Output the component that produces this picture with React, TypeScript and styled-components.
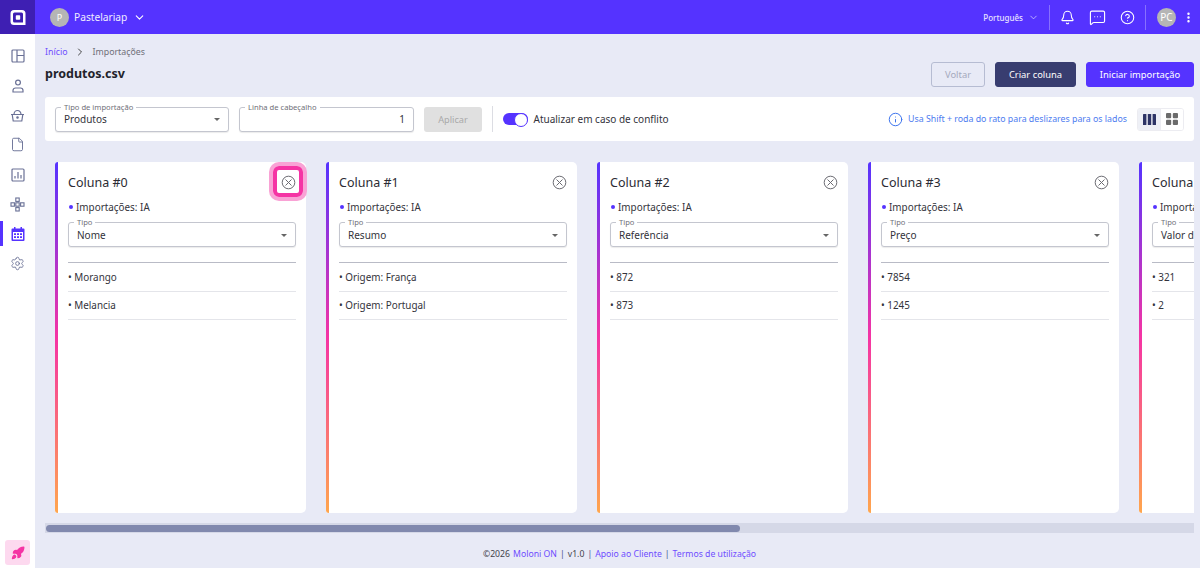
import React from "react";
import styled, { createGlobalStyle } from "styled-components";
import {
  Bell, ChevronDown, ChevronRight, CircleHelp, EllipsisVertical, File, Info,
  MessageSquareMore, Rocket, Settings,
} from "lucide-react";

const Global = createGlobalStyle`
  html, body { margin: 0; padding: 0; height: 100%; overflow: hidden; }
  body { font-family: "Noto Sans", sans-serif; color: #2b2b33; background: #e8eaf6; }
  * { box-sizing: border-box; }
`;

const Page = styled.div`
  width: 1200px; height: 568px; display: grid;
  grid-template-columns: 35px 1fr; grid-template-rows: 34px 1fr;
`;
const LogoCell = styled.div`
  background: #3e1fb3; display: flex; align-items: center; justify-content: center;
`;
const TopBar = styled.header`
  background: #5533ff; color: #fff; display: flex; align-items: center; padding: 0 5.500px 0 15px;
`;
const Avatar = styled.div`
  width: 19px; height: 19px; border-radius: 50%; background: #b5b5b5; color: #fff;
  font-size: 9px; display: flex; align-items: center; justify-content: center; flex-shrink: 0;
`;
const Company = styled.span`
  font-size: 10.200px; margin: 0 5.500px 0 5px; color: #f0edff;
`;
const Spacer = styled.div`flex: 1;`;
const Lang = styled.span`
  font-size: 8px; color: #e6e1ff; margin-right: 4.500px; font-weight: 500;
`;
const LangChevron = styled(ChevronDown)`
  margin-right: 10.500px; color: #e6e1ff;
`;
const VLine = styled.div`
  width: 1px; height: 25px; background: rgba(255,255,255,.3);
`;
const TopIcons = styled.div`
  display: flex; align-items: center; gap: 14px; margin: 0 10px;
`;
const BigAvatar = styled(Avatar)`
  margin-left: 11px; font-size: 10px;
`;
const Dots = styled(EllipsisVertical)`
  margin-left: 5.500px;
`;
const Sidebar = styled.nav`
  background: #fff; display: flex; flex-direction: column; align-items: center; padding-top: 7px;
`;
const NavItem = styled.div<{ $active?: boolean }>`
  width: 35px; height: 29.700px; flex-shrink: 0; display: flex; align-items: center; justify-content: center;
  color: ${p => p.$active ? "#5533ff" : "#6a7196"};
  position: relative;
  ${p => p.$active ? "&::before { content: ''; position: absolute; left: 0; top: 2px; width: 3px; height: 25px; background: #5533ff; }" : ""}
`;
const RocketBox = styled.div`
  margin-top: auto; margin-bottom: 3px; width: 25px; height: 25px; border-radius: 3px; background: #fdd9ef;
  color: #f534a4; display: flex; align-items: center; justify-content: center;
`;
const Main = styled.main`
  min-width: 0; display: flex; flex-direction: column; padding: 0 6px 0 10px;
`;
const Crumbs = styled.div`
  display: flex; align-items: center; gap: 6.500px; font-size: 8.800px; color: #6f6f78; height: 15px; margin-top: 10px;
`;
const Link = styled.a`color: #6e4dff;`;
const HeadRow = styled.div`
  display: flex; align-items: flex-start; height: 38px;
`;
const Title = styled.h1`
  margin: 5px 0 0; font-size: 12.500px; font-weight: 700; color: #23232b; line-height: 20px;
`;
const Btn = styled.button<{ $v: "ghost" | "dark" | "primary" }>`
  height: 25px; border-radius: 3px; font: 400 9.400px "Noto Sans", sans-serif; margin-left: 10px; margin-top: 3px; padding: 0;
  width: ${p => p.$v === "ghost" ? 54 : p.$v === "dark" ? 81 : 108}px;
  border: 1px solid ${p => p.$v === "ghost" ? "#b6bcd2" : p.$v === "dark" ? "#383d70" : "#5533ff"};
  background: ${p => p.$v === "ghost" ? "transparent" : p.$v === "dark" ? "#383d70" : "#5533ff"};
  color: ${p => p.$v === "ghost" ? "#a5a9bd" : "#fff"};
`;
const Filters = styled.section`
  height: 44px; background: #fff; border-radius: 3px; display: flex; align-items: center; padding: 0 10px; flex-shrink: 0;
`;
const Field = styled.div<{ $w?: number; $gap?: number }>`
  position: relative; width: ${p => p.$w ? `${p.$w}px` : "100%"}; height: 25px; border: 1px solid #c4c6cf; border-radius: 3px; background: #fff;
  display: flex; align-items: center; padding: 0 8px; font-size: 10px; color: #33333b;
  margin-left: ${p => p.$gap ?? 0}px;
  box-shadow: 0 1px 1px rgba(0,0,0,.08); flex-shrink: 0;
`;
const Legend = styled.span`
  position: absolute; left: 5px; top: -6px; padding: 0 3px; background: #fff; font-size: 7.600px; line-height: 10px; color: #6f6f78;
`;
const Caret = styled.span`
  margin-left: auto; margin-top: 1px; width: 0; height: 0; border-left: 3.500px solid transparent; border-right: 3.500px solid transparent; border-top: 3.500px solid #666;
`;
const NumberValue = styled.span`margin-left: auto;`;
const Apply = styled.button`
  height: 25px; width: 58px; margin-left: 10px; border: 0; border-radius: 3px; background: #e0e0e0; color: #a9a9a9;
  font: 400 9.200px "Noto Sans", sans-serif; padding: 0;
`;
const Divider = styled.div`
  width: 1px; height: 26px; background: #dcdde3; margin: 0 10px;
`;
const Toggle = styled.div`
  width: 25px; height: 12.500px; border-radius: 7px; background: #5533ff; position: relative; flex-shrink: 0;
  &::after { content: ""; position: absolute; right: 0; top: 0; width: 12.500px; height: 12.500px; border-radius: 50%; background: #fff; border: 1.500px solid #5533ff; }
`;
const ToggleLabel = styled.span`
  margin-left: 5.500px; font-size: 10px; color: #33333b;
`;
const Hint = styled.div`
  margin-left: auto; display: flex; align-items: center; gap: 5px; font-size: 8.800px; color: #4d7cf0;
`;
const ViewGroup = styled.div`
  margin-left: 10px; display: flex; height: 23px; width: 47px; border: 1px solid #ececf1; border-radius: 3px; overflow: hidden;
`;
const ViewBtn = styled.div<{ $on?: boolean }>`
  flex: 1; display: flex; align-items: center; justify-content: center;
  background: ${p => p.$on ? "#eef0f6" : "#fff"};
  & + & { border-left: 1px solid #ececf1; }
`;
const Scroller = styled.div`
  height: 382px; flex-shrink: 0; overflow: hidden; display: flex; gap: 20px; padding: 21px 10px 10px;
`;
const ScrollTrack = styled.div`
  height: 10px; flex-shrink: 0; background: #d5d8e7; padding: 1.500px 1px;
`;
const ScrollThumb = styled.div<{ $w: number }>`
  width: ${p => p.$w}px; height: 7px; background: #8189ae; border-radius: 4px;
`;
const Card = styled.article`
  position: relative; flex: 0 0 251px; height: 351px; background: #fff; border-radius: 3px 5px 5px 3px;
  padding: 0 10px 0 13px;
  &::before {
    content: ""; position: absolute; left: 0; top: 0; bottom: 0; width: 3px; border-radius: 3px 0 0 3px;
    background: linear-gradient(180deg, #5533ff 0%, #f534a4 50%, #ffa64d 100%);
  }
`;
const CardHead = styled.div`
  display: flex; align-items: center; justify-content: space-between; height: 20px; margin-top: 10px;
`;
const CardTitle = styled.h2`
  margin: 0; padding-top: 1px; font-size: 12.500px; line-height: 20px; font-weight: 400; color: #2b2b33;
`;
const CloseSvg = styled.svg`
  display: block; color: #6b6b72; margin-right: 0;
`;
const Spot = styled.div`
  position: absolute; left: 218px; top: 4px; width: 30px; height: 31px; border: 4px solid #f534a4; border-radius: 6px;
  box-shadow: 0 0 0 4px #f9a2d5;
`;
const Import = styled.div`
  display: flex; align-items: center; gap: 3px; font-size: 9.900px; height: 16px; margin-top: 7px; color: #33333b;
  &::before { content: ""; width: 4px; height: 4px; border-radius: 50%; background: #5533ff; margin-left: 1px; }
`;
const TypeField = styled(Field)`
  margin-top: 7px;
`;
const Rule = styled.div`
  height: 1px; background: #b9bbc6; margin-top: 15px;
`;
const DataRow = styled.div`
  height: 28.500px; display: flex; align-items: center; font-size: 9.900px; color: #33333b; border-bottom: 1px solid #e4e5ea;
`;
const Footer = styled.footer`
  flex: 1; display: flex; align-items: center; justify-content: center; font-size: 8.700px; color: #44444c; gap: 3px; padding-top: 7px;
`;
const Sep = styled.span`color: #44508a;`;

const CloseIcon = () => (
  <CloseSvg width="15" height="15" viewBox="0 0 15 15" fill="none" stroke="currentColor" strokeWidth="1">
    <circle cx="7.500" cy="7.500" r="6.300" /><path d="M4.500 4.500l6 6M10.500 4.500l-6 6" />
  </CloseSvg>
);
const LayoutIcon = () => (
  <svg width="14" height="14" viewBox="0 0 14 14" fill="none" stroke="currentColor" strokeWidth="1.2">
    <rect x="1" y="1" width="12" height="12" rx="1" /><path d="M6 1v12M6 6.500h7" />
  </svg>
);
const UserIcon = () => (
  <svg width="14" height="14" viewBox="0 0 14 14" fill="none" stroke="currentColor" strokeWidth="1.2">
    <circle cx="7" cy="3.600" r="2.400" /><path d="M2 13v-1.500A2.500 2.500 0 0 1 4.500 9h5a2.500 2.500 0 0 1 2.500 2.500V13z" />
  </svg>
);
const BasketIcon = () => (
  <svg width="15" height="15" viewBox="0 0 15 15" fill="none" stroke="currentColor" strokeWidth="1.2">
    <path d="M1 6.500h13M2.200 6.500l1 6.500h8.600l1-6.500M4 6.500a3.500 4 0 0 1 7 0" /><circle cx="7.500" cy="9.500" r=".7" fill="currentColor" />
  </svg>
);
const ChartIcon = () => (
  <svg width="14" height="14" viewBox="0 0 14 14" fill="none" stroke="currentColor" strokeWidth="1.2">
    <rect x="1" y="1" width="12" height="12" rx="1" /><path d="M4 10.500V8M7 10.500V4M10 10.500V7" />
  </svg>
);
const FlowIcon = () => (
  <svg width="15" height="15" viewBox="0 0 15 15" fill="none" stroke="currentColor" strokeWidth="1.100">
    <rect x="5.800" y="1" width="3.400" height="3.400" /><rect x="1" y="5.800" width="3.400" height="3.400" />
    <rect x="5.800" y="5.800" width="3.400" height="3.400" /><rect x="10.600" y="5.800" width="3.400" height="3.400" />
    <rect x="5.800" y="10.600" width="3.400" height="3.400" />
  </svg>
);
const CalendarIcon = () => (
  <svg width="14" height="14" viewBox="0 0 14 14">
    <path fill="currentColor" d="M3 0h1.500v1.500h5V0H11v1.500h1.500a1 1 0 0 1 1 1V13a1 1 0 0 1-1 1h-11a1 1 0 0 1-1-1V2.500a1 1 0 0 1 1-1H3z" />
    <path fill="#fff" d="M2 5h10v7.500H2z" />
    <path fill="currentColor" d="M3 6.200h2v1.800H3zM6 6.200h2v1.800H6zM9 6.200h2v1.800H9zM3 9.200h2v1.800H3zM6 9.200h2v1.800H6zM9 9.200h2v1.800H9z" />
  </svg>
);
const Logo = () => (
  <svg width="16" height="15" viewBox="0 0 16 15">
    <path fill="#fff" fillRule="evenodd" d="M4 0h8a3.500 3.500 0 0 1 3.500 3.500V15H4A3.500 3.500 0 0 1 .5 11.500v-8A3.500 3.500 0 0 1 4 0zM4.500 2.500a1.500 1.500 0 0 0-1.500 1.500v7a1.500 1.500 0 0 0 1.500 1.500H13V4a1.500 1.500 0 0 0-1.500-1.500z" />
    <rect x="5.800" y="5.300" width="4.400" height="4.400" rx=".8" fill="#fff" />
  </svg>
);
const ColumnsIcon = () => (
  <svg width="13" height="11" viewBox="0 0 13 11" fill="#2e3566">
    <rect width="3.400" height="11" rx=".6" /><rect x="4.800" width="3.400" height="11" rx=".6" /><rect x="9.600" width="3.400" height="11" rx=".6" />
  </svg>
);
const GridIcon = () => (
  <svg width="12" height="12" viewBox="0 0 12 12" fill="#6b6b6b">
    <rect width="5.200" height="5.200" rx="1" /><rect x="6.800" width="5.200" height="5.200" rx="1" /><rect y="6.800" width="5.200" height="5.200" rx="1" /><rect x="6.800" y="6.800" width="5.200" height="5.200" rx="1" />
  </svg>
);

const columns = [
  { type: "Nome", rows: ["Morango", "Melancia"] },
  { type: "Resumo", rows: ["Origem: França", "Origem: Portugal"] },
  { type: "Referência", rows: ["872", "873"] },
  { type: "Preço", rows: ["7854", "1245"] },
  { type: "Valor de venda", rows: ["321", "2"] },
];

export default function App() {
  return (
    <Page>
      <Global />
      <LogoCell><Logo /></LogoCell>
      <TopBar>
        <Avatar>P</Avatar>
        <Company>Pastelariap</Company>
        <ChevronDown size={13} strokeWidth={2} />
        <Spacer />
        <Lang>Português</Lang>
        <LangChevron size={11} strokeWidth={1.5} />
        <VLine />
        <TopIcons>
          <Bell size={15} strokeWidth={1.7} />
          <MessageSquareMore size={17} strokeWidth={1.6} />
          <CircleHelp size={15} strokeWidth={1.7} />
        </TopIcons>
        <VLine />
        <BigAvatar>PC</BigAvatar>
        <Dots size={13} strokeWidth={2.5} />
      </TopBar>
      <Sidebar>
        <NavItem><LayoutIcon /></NavItem>
        <NavItem><UserIcon /></NavItem>
        <NavItem><BasketIcon /></NavItem>
        <NavItem><File size={15} strokeWidth={1.5} /></NavItem>
        <NavItem><ChartIcon /></NavItem>
        <NavItem><FlowIcon /></NavItem>
        <NavItem $active><CalendarIcon /></NavItem>
        <NavItem><Settings size={15} strokeWidth={1.4} /></NavItem>
        <RocketBox><Rocket size={14} strokeWidth={2.2} fill="currentColor" /></RocketBox>
      </Sidebar>
      <Main>
        <Crumbs>
          <Link>Início</Link>
          <ChevronRight size={12} strokeWidth={2} color="#444" />
          <span>Importações</span>
        </Crumbs>
        <HeadRow>
          <Title>produtos.csv</Title>
          <Spacer />
          <Btn $v="ghost">Voltar</Btn>
          <Btn $v="dark">Criar coluna</Btn>
          <Btn $v="primary">Iniciar importação</Btn>
        </HeadRow>
        <Filters>
          <Field $w={174}>
            <Legend>Tipo de importação</Legend>
            Produtos
            <Caret />
          </Field>
          <Field $w={175} $gap={10}>
            <Legend>Linha de cabeçalho</Legend>
            <NumberValue>1</NumberValue>
          </Field>
          <Apply>Aplicar</Apply>
          <Divider />
          <Toggle />
          <ToggleLabel>Atualizar em caso de conflito</ToggleLabel>
          <Hint>
            <Info size={15} strokeWidth={1.6} color="#3d74ee" />
            Usa Shift + roda do rato para deslizares para os lados
          </Hint>
          <ViewGroup>
            <ViewBtn $on><ColumnsIcon /></ViewBtn>
            <ViewBtn><GridIcon /></ViewBtn>
          </ViewGroup>
        </Filters>
        <Scroller>
          {columns.map((c, i) => (
            <Card key={i}>
              <CardHead>
                <CardTitle>Coluna #{i}</CardTitle>
                <CloseIcon />
              </CardHead>
              {i === 0 && <Spot />}
              <Import>Importações: IA</Import>
              <TypeField>
                <Legend>Tipo</Legend>
                {c.type}
                <Caret />
              </TypeField>
              <Rule />
              {c.rows.map(r => <DataRow key={r}>• {r}</DataRow>)}
            </Card>
          ))}
        </Scroller>
        <ScrollTrack><ScrollThumb $w={694} /></ScrollTrack>
        <Footer>
          <span>©2026</span>
          <Link>Moloni ON</Link>
          <Sep>|</Sep>
          <span>v1.0</span>
          <Sep>|</Sep>
          <Link>Apoio ao Cliente</Link>
          <Sep>|</Sep>
          <Link>Termos de utilização</Link>
        </Footer>
      </Main>
    </Page>
  );
}
